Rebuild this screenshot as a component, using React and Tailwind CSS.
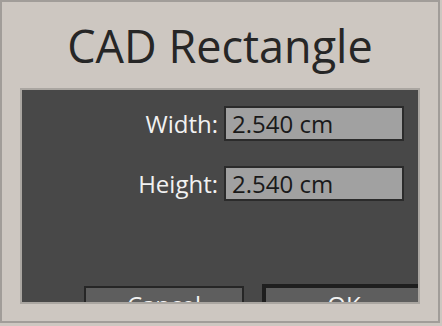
export default function App() {
  const font = { fontFamily: '"Open Sans", "Noto Sans", sans-serif' };
  return (
    <div className="w-[442px] h-[326px] bg-[#cdc7c1]" style={font}>
      <div className="w-[440px] h-[323px] border-2 border-[#a19d99] flex flex-col">
        <div className="pt-[21px] h-[86px] text-center text-[45px] leading-[45px] text-[#262626]">
          CAD Rectangle
        </div>
        <div className="ml-[18px] w-[400px] h-[216px] border-2 border-[#aaa6a1] bg-[#484848] overflow-hidden flex flex-col">
          <div className="flex flex-col gap-[25px] pt-[16px] pr-[14px]">
            <div className="flex justify-end items-center gap-[6px]">
              <span className="text-[24px] leading-[31px] text-[#f2f2f2]">Width:</span>
              <div className="w-[180px] h-[35px] border-2 border-[#2b2b2b] bg-[#a1a1a1] pl-[6px] text-[24px] leading-[31px] text-[#1a1a1a]">
                2.540 cm
              </div>
            </div>
            <div className="flex justify-end items-center gap-[6px]">
              <span className="text-[24px] leading-[31px] text-[#f2f2f2]">Height:</span>
              <div className="w-[180px] h-[35px] border-2 border-[#2b2b2b] bg-[#a1a1a1] pl-[6px] text-[24px] leading-[31px] text-[#1a1a1a]">
                2.540 cm
              </div>
            </div>
          </div>
          <div className="flex items-start mt-[83px] pl-[62px] gap-[18px] shrink-0">
            <div className="mt-[2px] w-[160px] h-[40px] shrink-0 border-2 border-[#262626] bg-[#5e5e5e] text-center text-[24px] leading-[34px] text-[#f2f2f2]">
              Cancel
            </div>
            <div className="w-[164px] h-[42px] shrink-0 border-4 border-[#1e1e1e] bg-[#5e5e5e] text-center text-[24px] leading-[34px] text-[#f2f2f2]">
              OK
            </div>
          </div>
        </div>
      </div>
    </div>
  );
}
